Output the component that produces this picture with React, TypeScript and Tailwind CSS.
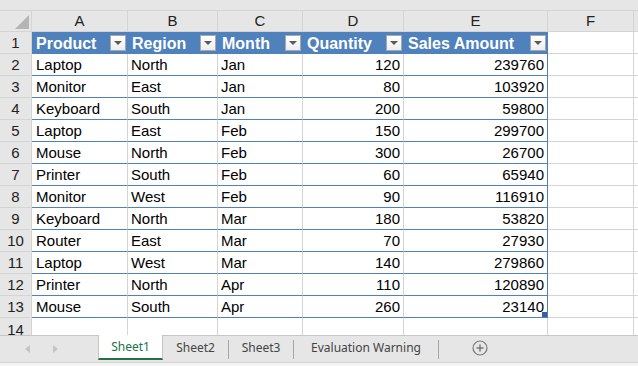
import React from "react";

const COLS = ["A", "B", "C", "D", "E", "F"];
const COL_W = ["w-[96px]", "w-[90px]", "w-[85px]", "w-[101px]", "w-[144px]", "w-[86px]"];

const HEADERS = ["Product", "Region", "Month", "Quantity", "Sales Amount"];

const ROWS: [string, string, string, number, number][] = [
  ["Laptop", "North", "Jan", 120, 239760],
  ["Monitor", "East", "Jan", 80, 103920],
  ["Keyboard", "South", "Jan", 200, 59800],
  ["Laptop", "East", "Feb", 150, 299700],
  ["Mouse", "North", "Feb", 300, 26700],
  ["Printer", "South", "Feb", 60, 65940],
  ["Monitor", "West", "Feb", 90, 116910],
  ["Keyboard", "North", "Mar", 180, 53820],
  ["Router", "East", "Mar", 70, 27930],
  ["Laptop", "West", "Mar", 140, 279860],
  ["Printer", "North", "Apr", 110, 120890],
  ["Mouse", "South", "Apr", 260, 23140],
];

function FilterButton() {
  return (
    <div className="ml-auto mr-px mt-[3px] flex h-[16px] w-[16px] shrink-0 items-center justify-center border border-[#a9a9a9] bg-gradient-to-b from-white to-[#ededed]">
      <div className="h-0 w-0 border-x-[4px] border-t-[4px] border-x-transparent border-t-[#595959]" />
    </div>
  );
}

function RowHead({ n }: { n: number }) {
  return (
    <div className="flex h-[22px] w-[32px] shrink-0 items-center justify-center border-b border-r border-[#d4d4d4] bg-[#e6e6e6] pt-[2px] text-[#222]">
      {n}
    </div>
  );
}

function TabSep() {
  return <div className="mt-[4px] h-[19px] w-px shrink-0 bg-[#a6a6a6]" />;
}

export default function App() {
  return (
    <div className="flex h-[366px] w-[638px] flex-col overflow-hidden bg-white font-['Liberation_Sans',Arial,sans-serif] text-[15px] text-black">
      <div className="h-[11px] shrink-0 border-b border-[#d4d4d4] bg-[#e6e6e6]" />

      {/* column letters */}
      <div className="flex h-[21px] shrink-0">
        <div className="relative w-[32px] shrink-0 border-b border-r border-[#d4d4d4] bg-[#e6e6e6]">
          <svg className="absolute bottom-[2px] right-[2px]" width="14" height="14" viewBox="0 0 14 14">
            <polygon points="14,0 14,14 0,14" fill="#b4b4b4" />
          </svg>
        </div>
        {COLS.map((c, i) => (
          <div
            key={c}
            className={`flex ${COL_W[i]} shrink-0 items-center justify-center border-b border-r border-[#d4d4d4] bg-[#e6e6e6] pt-px text-[#222]`}
          >
            {c}
          </div>
        ))}
        <div className="flex-1 border-b border-[#d4d4d4] bg-[#e6e6e6]" />
      </div>

      {/* table header row */}
      <div className="flex h-[22px] shrink-0">
        <RowHead n={1} />
        {HEADERS.map((h, i) => (
          <div
            key={h}
            className={`flex ${COL_W[i]} shrink-0 border-b border-r border-[#4f81bd] bg-[#4f81bd] pl-[4px] text-[16px] font-bold leading-[23px] text-white`}
          >
            <span>{h}</span>
            <FilterButton />
          </div>
        ))}
        <div className={`${COL_W[5]} shrink-0 border-b border-r border-[#d4d4d4]`} />
        <div className="flex-1 border-b border-[#d4d4d4]" />
      </div>

      {ROWS.map((r, idx) => {
        const last = idx === ROWS.length - 1;
        return (
          <div key={idx} className="flex h-[22px] shrink-0">
            <RowHead n={idx + 2} />
            <div className={`flex ${COL_W[0]} shrink-0 items-center border-b border-r border-b-[#4f81bd] border-r-[#d4d4d4] pl-[4px] pt-[2px]`}>
              {r[0]}
            </div>
            <div className={`flex ${COL_W[1]} shrink-0 items-center border-b border-r border-b-[#4f81bd] border-r-[#d4d4d4] pl-[3px] pt-[2px]`}>
              {r[1]}
            </div>
            <div className={`flex ${COL_W[2]} shrink-0 items-center border-b border-r border-b-[#4f81bd] border-r-[#d4d4d4] pl-[3px] pt-[2px]`}>
              {r[2]}
            </div>
            <div className={`flex ${COL_W[3]} shrink-0 items-center justify-end border-b border-r border-b-[#4f81bd] border-r-[#d4d4d4] pr-[3px] pt-[2px]`}>
              {r[3]}
            </div>
            <div className={`relative flex ${COL_W[4]} shrink-0 items-center justify-end border-b border-r border-[#4f81bd] pr-[3px] pt-[2px]`}>
              {r[4]}
              {last ? <div className="absolute bottom-0 right-0 h-[5px] w-[5px] bg-[#3b5ba9]" /> : null}
            </div>
            <div className={`${COL_W[5]} shrink-0 border-b border-r border-[#d4d4d4]`} />
            <div className="flex-1 border-b border-[#d4d4d4]" />
          </div>
        );
      })}

      {/* row 14 (partly hidden behind the tab bar) */}
      <div className="flex h-[17px] shrink-0 overflow-hidden">
        <div className="flex h-[22px] w-[32px] shrink-0 items-center justify-center border-r border-[#d4d4d4] bg-[#e6e6e6] pt-[2px] text-[#222]">
          14
        </div>
        {COL_W.map((w, i) => (
          <div key={i} className={`${w} shrink-0 border-r border-[#d4d4d4]`} />
        ))}
        <div className="flex-1" />
      </div>

      {/* sheet tabs */}
      <div className="flex h-[28px] shrink-0 border-b border-t border-b-[#d4d4d4] border-t-[#c6c6c6] bg-[#e6e6e6] font-['Noto_Sans',sans-serif] text-[12px] text-[#444]">
        <div className="flex w-[98px] shrink-0 items-center">
          <svg className="ml-[25px]" width="5" height="8" viewBox="0 0 5 8">
            <polygon points="5,0 5,8 0,4" fill="#c4c4c4" />
          </svg>
          <svg className="ml-[23px]" width="5" height="8" viewBox="0 0 5 8">
            <polygon points="0,0 0,8 5,4" fill="#c4c4c4" />
          </svg>
        </div>
        <div className="-mt-px flex h-[25px] w-[65px] shrink-0 items-center justify-center border-x border-b-2 border-x-[#c6c6c6] border-b-[#217346] bg-white pt-px text-[#217346]">
          Sheet1
        </div>
        <div className="flex h-[24px] w-[65px] shrink-0 items-center justify-center">Sheet2</div>
        <TabSep />
        <div className="flex h-[24px] w-[64px] shrink-0 items-center justify-center">Sheet3</div>
        <TabSep />
        <div className="flex h-[24px] w-[144px] shrink-0 items-center justify-center">Evaluation Warning</div>
        <TabSep />
        <div className="ml-[33px] flex h-[24px] items-center">
          <svg width="16" height="16" viewBox="0 0 16 16">
            <circle cx="8" cy="8" r="7" fill="none" stroke="#7a7a7a" strokeWidth="1.2" />
            <path d="M8 4.5v7M4.5 8h7" stroke="#7a7a7a" strokeWidth="1.5" />
          </svg>
        </div>
      </div>
      <div className="flex-1 bg-[#f3f3f3]" />
    </div>
  );
}
